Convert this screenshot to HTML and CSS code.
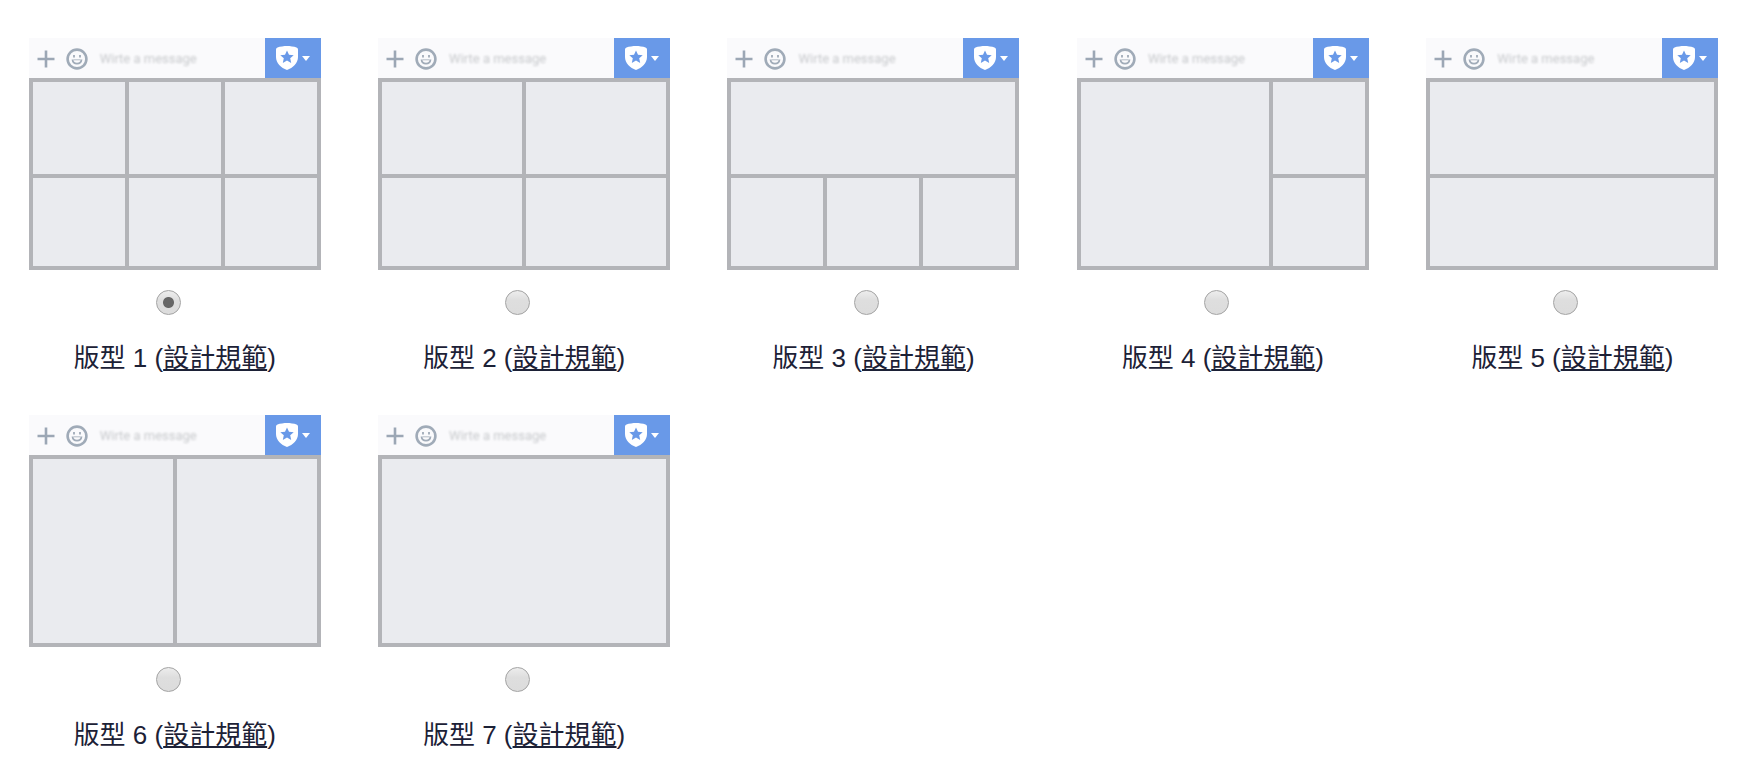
FILE: index.html
```
<!DOCTYPE html>
<html lang="zh-Hant">
<head>
  <meta charset="UTF-8">
  <meta name="viewport" content="width=device-width,initial-scale=1">
  <title>選單版型</title>
  <link rel="stylesheet" href="styles.css">
</head>
<body>
<form class="layouts"></form>

<!-- one card, cloned for every layout -->
<template id="layout-card">
  <div class="layout">
    <div class="preview">
      <div class="chat-bar">
        <button type="button" class="chat-icon" aria-label="Add">
          <svg width="18" height="18" viewBox="0 0 18 18"><path d="M9 0.5V17.5M0.5 9H17.5" stroke="#9ca7b5" stroke-width="2.6" fill="none"/></svg>
        </button>
        <button type="button" class="chat-icon" aria-label="Emoji">
          <svg width="22" height="22" viewBox="0 0 22 22" fill="none" stroke="#a0abb8">
            <circle cx="11" cy="11" r="9.4" stroke-width="2.6"/>
            <path d="M6.5 11.5C7 17 15 17 15.5 11.5" stroke-width="1.8"/>
            <path d="M7.5 11.8H14.5" stroke-width="0.8"/>
            <path d="M8 7V9.5M14 7V9.5" stroke-width="1.8"/>
          </svg>
        </button>
        <input class="chat-input" type="text" placeholder="Wirte a message" aria-label="Message" readonly>
        <button type="button" class="chat-menu" aria-label="Menu">
          <svg width="22" height="24" viewBox="0 0 22 24">
            <path fill="#fff" d="M11 0C14 0 18 0.6 20.5 1.4Q22 1.8 22 3.5V11C22 17 17 22 11 24C5 22 0 17 0 11V3.5Q0 1.8 1.5 1.4C4 0.6 8 0 11 0Z"/>
            <path fill="#6999e8" d="M11 4.4L13 8.7L17.7 9.2L14.2 12.3L15.2 16.9L11 14.6L6.8 16.9L7.8 12.3L4.3 9.2L9 8.7Z"/>
          </svg>
          <svg width="8" height="5" viewBox="0 0 8 5"><path fill="#fff" d="M0 0H8L4 5Z"/></svg>
        </button>
      </div>
      <div class="areas"></div>
    </div>
    <input class="radio" type="radio" name="layout">
    <p class="caption"><label></label> (<a href="#">設計規範</a>)</p>
  </div>
</template>

<script>
// number of tappable areas in each layout
var areas = [6, 4, 4, 3, 2, 2, 1];
var form = document.querySelector('.layouts');
var template = document.getElementById('layout-card');

areas.forEach(function (count, i) {
  var n = i + 1;
  var card = template.content.cloneNode(true);
  var box = card.querySelector('.areas');
  var radio = card.querySelector('.radio');
  var label = card.querySelector('label');

  box.classList.add('areas-' + n);
  for (var j = 0; j < count; j++) {
    box.appendChild(document.createElement('div')).className = 'area';
  }
  radio.id = 'layout-' + n;
  radio.value = n;
  radio.checked = n === 1;
  label.htmlFor = radio.id;
  label.textContent = '版型 ' + n;
  form.appendChild(card);
});
</script>
</body>
</html>
```
FILE: styles.css
```
body {
  margin: 0;
  background: #fff;
  color: #1c2136;
  font-family: "Liberation Sans", "Noto Sans CJK TC", sans-serif;
  font-size: 26px;
}

.layouts {
  display: grid;
  grid-template-columns: repeat(5, 1fr);
  row-gap: 37px;
  padding: 38px 9px 0 0;
}

.layout {
  display: flex;
  flex-direction: column;
  align-items: center;
}

.preview {
  width: 100%;
  max-width: 292px;
}

.chat-bar {
  display: flex;
  align-items: center;
  box-sizing: border-box;
  height: 40px;
  padding: 2px 0 0 8px;
  background: #fafafc;
}

.chat-bar button {
  display: flex;
  align-items: center;
  padding: 0;
  border: 0;
  background: none;
}

.chat-bar svg {
  filter: blur(0.6px);
}

.chat-icon {
  margin-right: 11px;
}

.chat-input {
  flex: 1;
  min-width: 0;
  padding: 0 0 2px 1px;
  border: 0;
  background: none;
  font-family: Roboto, sans-serif;
  font-size: 13px;
  filter: blur(1px);
}

.chat-input::placeholder {
  color: #c8cacd;
}

.chat-bar .chat-menu {
  align-self: flex-end;
  justify-content: center;
  gap: 4px;
  width: 56px;
  height: 40px;
  background: #6999e8;
}

.areas {
  display: grid;
  grid-template-rows: 92px 88px;
  gap: 4px;
  padding: 4px;
  background: #b3b4b8;
}

.area {
  background: #eaebef;
}

.areas-1,
.areas-3,
.areas-4 {
  grid-template-columns: repeat(3, 1fr);
}

.areas-2,
.areas-6 {
  grid-template-columns: repeat(2, 1fr);
}

.areas-3 .area:first-child {
  grid-column: 1 / -1;
}

.areas-4 .area:first-child {
  grid-column: span 2;
  grid-row: span 2;
}

.areas-6 .area,
.areas-7 .area {
  grid-row: span 2;
}

.radio {
  appearance: none;
  width: 25px;
  height: 25px;
  margin: 20px 13px 0 0;
  border: 1px solid #a3a3a3;
  border-radius: 50%;
  background: linear-gradient(#ededed, #dedede 40%, #dcdcdc);
}

.radio:checked {
  background: radial-gradient(circle, #666 0 5px, transparent 6px), linear-gradient(#ededed, #dedede 40%, #dcdcdc);
}

.caption {
  margin: 23px 0 0;
  line-height: 40px;
}

.caption a {
  color: inherit;
}
```
